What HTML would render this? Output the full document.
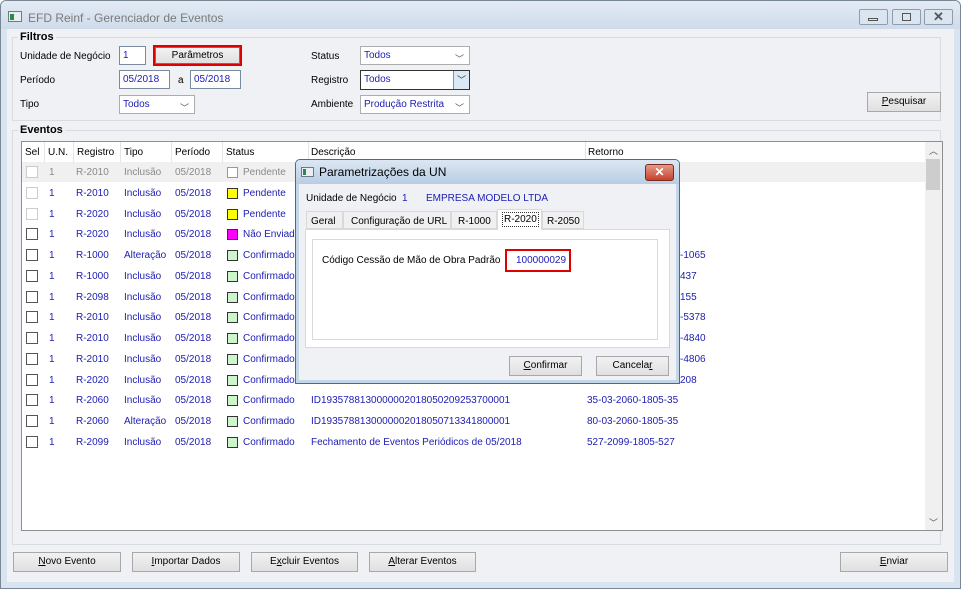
<!DOCTYPE html>
<html><head><meta charset="utf-8"><style>
*{box-sizing:border-box;margin:0;padding:0}
body{width:961px;height:589px;overflow:hidden;background:#fff;font-family:"Liberation Sans",sans-serif;font-size:10px;color:#000;position:relative}
.a{position:absolute}
.t{position:absolute;white-space:nowrap;line-height:13px}
.blue{color:#1c1cb4}
.grey{color:#8a8a8a}
.btn{position:absolute;background:linear-gradient(#f2f2f2,#e0e0e0);border:1px solid #a8a8a8;text-align:center;font-size:10px;line-height:18px}
.inp{position:absolute;background:#fff;border:1px solid #7a8ba0;color:#1c1cb4;padding-left:3px;line-height:18px}
.cb{position:absolute;width:12px;height:12px;border:1px solid #555;background:#fff}
.sq{position:absolute;width:11px;height:11px;border:1px solid #333}
.chev{position:absolute;right:5px;top:3px;color:#555;font-size:9px}
</style></head><body>
<div class="a" style="left:0;top:0;width:961px;height:589px;background:#d9e4f1;border:1px solid #7a8797;border-radius:6px 6px 0 0"></div>
<div class="a" style="left:1px;top:1px;width:959px;height:28px;background:linear-gradient(#e3ebf5,#cfdbe9);border-radius:5px 5px 0 0"></div>
<div class="a" style="left:8px;top:11px;width:14px;height:11px;background:#e9eef3;border:1px solid #6c7a88"></div>
<div class="a" style="left:10px;top:14px;width:4px;height:6px;background:#2a8a4a"></div>
<div class="t" style="left:28px;top:12px;color:#7a7a7a;font-size:12px">EFD Reinf - Gerenciador de Eventos</div>
<div class="a" style="left:859px;top:9px;width:29px;height:16px;border:1px solid #8d9cae;border-radius:2px;background:#dbe5f0"></div>
<div class="a" style="left:892px;top:9px;width:29px;height:16px;border:1px solid #8d9cae;border-radius:2px;background:#dbe5f0"></div>
<div class="a" style="left:924px;top:9px;width:29px;height:16px;border:1px solid #8d9cae;border-radius:2px;background:#dbe5f0"></div>
<div class="a" style="left:868px;top:18px;width:10px;height:3px;border:1px solid #555"></div>
<div class="a" style="left:902px;top:13px;width:9px;height:8px;border:1px solid #555"></div>
<div class="t" style="left:933px;top:10px;color:#555;font-size:13px;font-weight:bold">✕</div>
<div class="a" style="left:7px;top:29px;width:947px;height:553px;background:#f0f1f5"></div>
<div class="a" style="left:12px;top:37px;width:929px;height:84px;border:1px solid #d8dbe0"></div>
<div class="t" style="left:18px;top:31px;font-weight:bold;font-size:11px;background:#f0f1f5;padding:0 2px">Filtros</div>
<div class="t" style="left:20px;top:50px">Unidade de Negócio</div>
<div class="inp" style="left:119px;top:46px;width:27px;height:19px">1</div>
<div class="a" style="left:153px;top:45px;width:89px;height:21px;border:2px solid #e00000"></div>
<div class="btn" style="left:155px;top:47px;width:85px;height:17px;line-height:15px;border-color:#3c7fb1">Parâmetros</div>
<div class="t" style="left:20px;top:74px">Período</div>
<div class="inp" style="left:119px;top:70px;width:51px;height:19px">05/2018</div>
<div class="t" style="left:178px;top:74px">a</div>
<div class="inp" style="left:190px;top:70px;width:51px;height:19px">05/2018</div>
<div class="t" style="left:20px;top:98px">Tipo</div>
<div class="inp" style="left:119px;top:95px;width:76px;height:19px;border-color:#adadad">Todos<span class="chev">﹀</span></div>
<div class="t" style="left:311px;top:50px">Status</div>
<div class="inp" style="left:360px;top:46px;width:110px;height:19px;border-color:#adadad">Todos<span class="chev">﹀</span></div>
<div class="t" style="left:311px;top:74px">Registro</div>
<div class="inp" style="left:360px;top:70px;width:110px;height:20px;border-color:#333">Todos</div>
<div class="a" style="left:453px;top:71px;width:16px;height:18px;background:#dbe8f5;border-left:1px solid #569de5;color:#333;font-size:9px;text-align:center;line-height:18px">﹀</div>
<div class="t" style="left:311px;top:98px">Ambiente</div>
<div class="inp" style="left:360px;top:95px;width:110px;height:19px;border-color:#adadad">Produção Restrita<span class="chev">﹀</span></div>
<div class="btn" style="left:867px;top:92px;width:74px;height:20px"><u>P</u>esquisar</div>
<div class="a" style="left:12px;top:130px;width:929px;height:415px;border:1px solid #d8dbe0"></div>
<div class="t" style="left:18px;top:124px;font-weight:bold;font-size:11px;background:#f0f1f5;padding:0 2px">Eventos</div>
<div class="a" style="left:21px;top:141px;width:922px;height:390px;background:#fff;border:1px solid #8e8f8f"></div>
<div class="a" style="left:925px;top:142px;width:17px;height:388px;background:#f0f0f0"></div>
<div class="a" style="left:926px;top:159px;width:14px;height:31px;background:#cdcdcd"></div>
<div class="t" style="left:929px;top:145px;color:#555;font-size:9px">︿</div>
<div class="t" style="left:929px;top:517px;color:#555;font-size:9px">﹀</div>
<div class="a" style="left:22px;top:162px;width:903px;height:20px;background:#f0f0f0"></div>
<div class="a" style="left:44px;top:142px;height:20px;border-left:1px solid #e5e5e5"></div>
<div class="a" style="left:73px;top:142px;height:20px;border-left:1px solid #e5e5e5"></div>
<div class="a" style="left:120px;top:142px;height:20px;border-left:1px solid #e5e5e5"></div>
<div class="a" style="left:171px;top:142px;height:20px;border-left:1px solid #e5e5e5"></div>
<div class="a" style="left:222px;top:142px;height:20px;border-left:1px solid #e5e5e5"></div>
<div class="a" style="left:308px;top:142px;height:20px;border-left:1px solid #e5e5e5"></div>
<div class="a" style="left:585px;top:142px;height:20px;border-left:1px solid #e5e5e5"></div>
<div class="t" style="left:25px;top:146px">Sel</div>
<div class="t" style="left:48px;top:146px">U.N.</div>
<div class="t" style="left:77px;top:146px">Registro</div>
<div class="t" style="left:124px;top:146px">Tipo</div>
<div class="t" style="left:175px;top:146px">Período</div>
<div class="t" style="left:226px;top:146px">Status</div>
<div class="t" style="left:311px;top:146px">Descrição</div>
<div class="t" style="left:588px;top:146px">Retorno</div>
<div id="rows"></div>
<div class="btn" style="left:13px;top:552px;width:108px;height:20px"><u>N</u>ovo Evento</div>
<div class="btn" style="left:132px;top:552px;width:108px;height:20px"><u>I</u>mportar Dados</div>
<div class="btn" style="left:251px;top:552px;width:107px;height:20px">E<u>x</u>cluir Eventos</div>
<div class="btn" style="left:369px;top:552px;width:107px;height:20px"><u>A</u>lterar Eventos</div>
<div class="btn" style="left:840px;top:552px;width:108px;height:20px"><u>E</u>nviar</div>
<div class="a" style="left:295px;top:159px;width:385px;height:225px;background:#c4d6ea;border:1px solid #3c6f96;border-radius:5px 5px 0 0"></div>
<div class="a" style="left:296px;top:160px;width:383px;height:24px;background:linear-gradient(#dce7f3,#b8cde4);border-radius:4px 4px 0 0"></div>
<div class="a" style="left:301px;top:167px;width:13px;height:10px;background:#e9eef3;border:1px solid #6c7a88"></div>
<div class="a" style="left:303px;top:169px;width:3px;height:6px;background:#2a8a4a"></div>
<div class="t" style="left:319px;top:166px;font-size:12px">Parametrizações da UN</div>
<div class="a" style="left:645px;top:164px;width:29px;height:17px;background:linear-gradient(#e59a8a,#c4442d);border:1px solid #7c2a1e;border-radius:3px;color:#fff;font-weight:bold;text-align:center;line-height:15px;font-size:12px">✕</div>
<div class="a" style="left:299px;top:184px;width:377px;height:196px;background:#f0f1f5"></div>
<div class="t" style="left:306px;top:192px">Unidade de Negócio</div>
<div class="t blue" style="left:402px;top:192px">1</div>
<div class="t blue" style="left:426px;top:192px">EMPRESA MODELO LTDA</div>
<div class="a" style="left:305px;top:229px;width:365px;height:119px;background:#fff;border:1px solid #d9d9d9"></div>
<div class="a" style="left:306px;top:211px;width:37px;height:18px;background:#f0f0f0;border:1px solid #d9d9d9"></div>
<div class="t" style="left:311px;top:215px">Geral</div>
<div class="a" style="left:343px;top:211px;width:108px;height:18px;background:#f0f0f0;border:1px solid #d9d9d9"></div>
<div class="t" style="left:351px;top:215px">Configuração de URL</div>
<div class="a" style="left:451px;top:211px;width:46px;height:18px;background:#f0f0f0;border:1px solid #d9d9d9"></div>
<div class="t" style="left:458px;top:215px">R-1000</div>
<div class="a" style="left:497px;top:209px;width:45px;height:21px;background:#fff;border:1px solid #d9d9d9;border-bottom:none"></div>
<div class="t" style="left:502px;top:212px;border:1px dotted #333;padding:0 1px">R-2020</div>
<div class="a" style="left:542px;top:211px;width:42px;height:18px;background:#f0f0f0;border:1px solid #d9d9d9"></div>
<div class="t" style="left:547px;top:215px">R-2050</div>
<div class="a" style="left:312px;top:239px;width:346px;height:101px;border:1px solid #d9d9d9"></div>
<div class="t" style="left:322px;top:254px">Código Cessão de Mão de Obra Padrão</div>
<div class="a" style="left:505px;top:249px;width:66px;height:23px;border:2px solid #e00000"></div>
<div class="t blue" style="left:516px;top:254px">100000029</div>
<div class="btn" style="left:509px;top:356px;width:73px;height:20px"><u>C</u>onfirmar</div>
<div class="btn" style="left:596px;top:356px;width:73px;height:20px">Cancela<u>r</u></div>
<script>
var R=[["R-2010","Inclusão","#fff","Pendente","",""],["R-2010","Inclusão","#ffff00","Pendente","",""],["R-2020","Inclusão","#ffff00","Pendente","",""],["R-2020","Inclusão","#ff00ff","Não Enviado","",""],["R-1000","Alteração","#ccf5cc","Confirmado","","-1065"],["R-1000","Inclusão","#ccf5cc","Confirmado","","437"],["R-2098","Inclusão","#ccf5cc","Confirmado","","155"],["R-2010","Inclusão","#ccf5cc","Confirmado","","-5378"],["R-2010","Inclusão","#ccf5cc","Confirmado","","-4840"],["R-2010","Inclusão","#ccf5cc","Confirmado","","-4806"],["R-2020","Inclusão","#ccf5cc","Confirmado","","208"],["R-2060","Inclusão","#ccf5cc","Confirmado","ID1935788130000002018050209253700001","35-03-2060-1805-35"],["R-2060","Alteração","#ccf5cc","Confirmado","ID1935788130000002018050713341800001","80-03-2060-1805-35"],["R-2099","Inclusão","#ccf5cc","Confirmado","Fechamento de Eventos Periódicos de 05/2018","527-2099-1805-527"]];
var h="";R.forEach(function(r,i){var y=166+i*20.75;var c=i==0?"grey":"blue";var cbb=i<3?"#ccc":"#555";
h+='<div class="cb" style="left:26px;top:'+(y)+'px;border-color:'+cbb+'"></div>';
h+='<div class="t '+c+'" style="left:49px;top:'+y+'px">1</div>';
h+='<div class="t '+c+'" style="left:76px;top:'+y+'px">'+r[0]+'</div>';
h+='<div class="t '+c+'" style="left:124px;top:'+y+'px">'+r[1]+'</div>';
h+='<div class="t '+c+'" style="left:175px;top:'+y+'px">05/2018</div>';
h+='<div class="sq" style="left:227px;top:'+(y+1)+'px;background:'+r[2]+';border-color:'+(i==0?"#999":"#333")+'"></div>';
h+='<div class="t '+c+'" style="left:243px;top:'+y+'px">'+r[3]+'</div>';
if(r[4])h+='<div class="t blue" style="left:311px;top:'+y+'px">'+r[4]+'</div>';
if(r[5])h+='<div class="t blue" style="left:'+(i<11?680:587)+'px;top:'+y+'px">'+r[5]+'</div>';});
document.getElementById("rows").innerHTML=h;
</script>
</body></html>
